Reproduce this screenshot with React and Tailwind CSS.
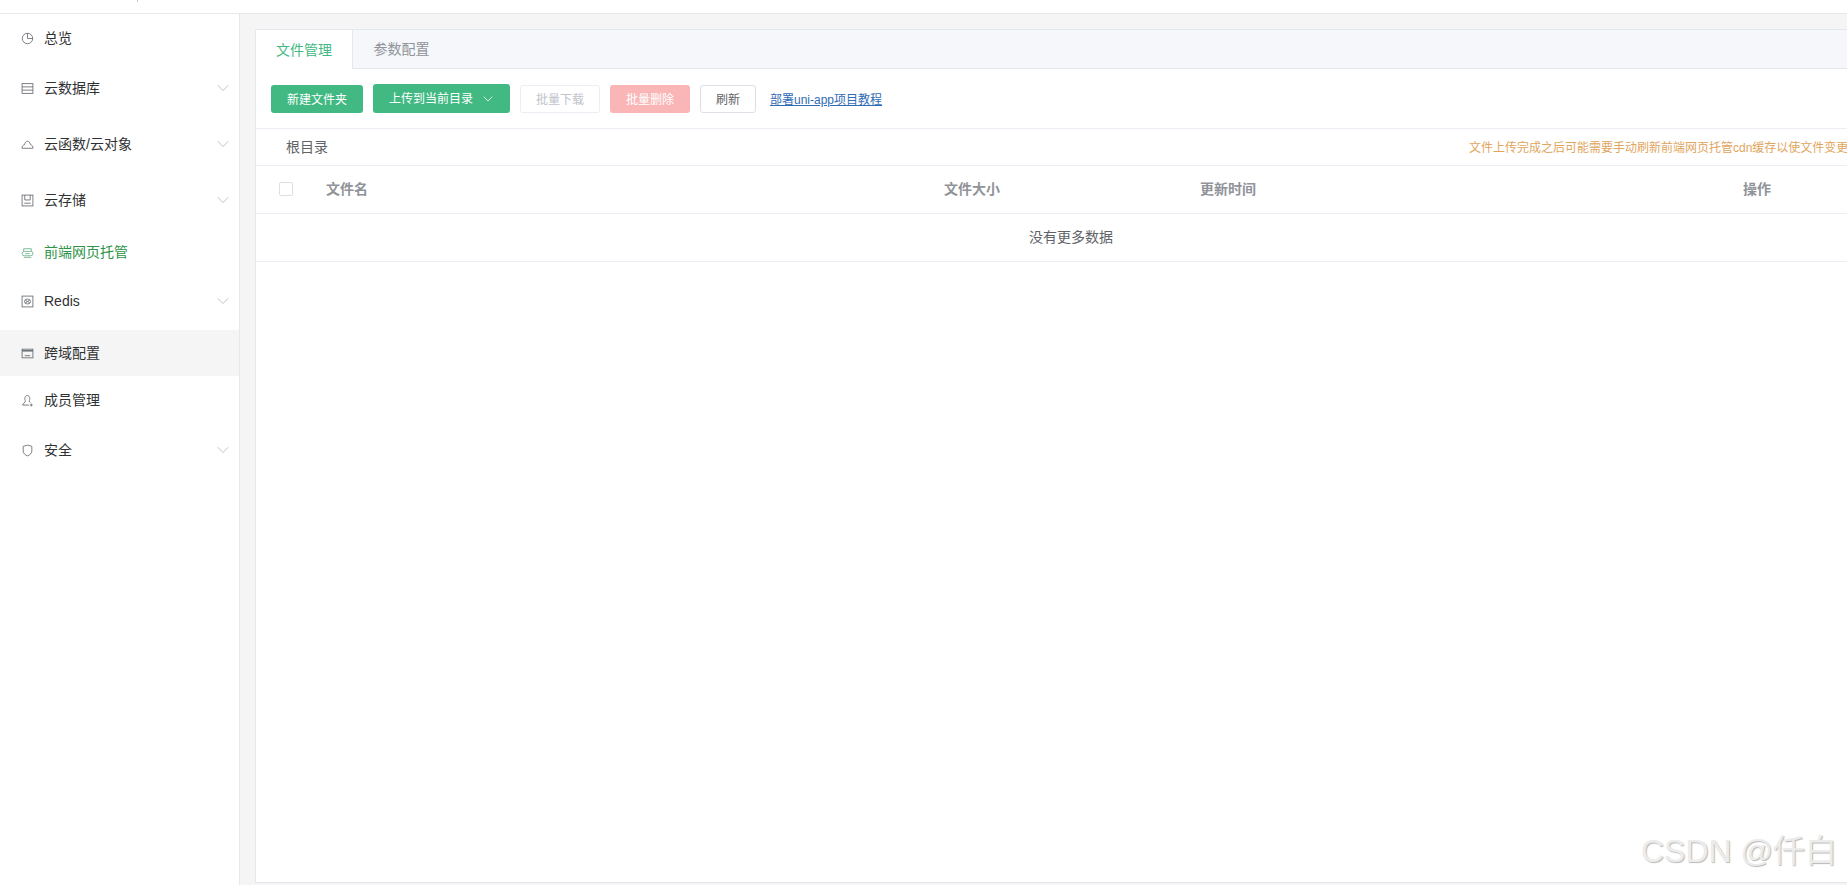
import React from 'react';
import { ChevronDown } from 'lucide-react';

const font = { fontFamily: '"Liberation Sans", "Noto Sans CJK SC", sans-serif' };

const icons = {
  overview: (
    <>
      <circle cx="6" cy="6" r="4.8" />
      <path d="M6 1.2V6h4.8" />
    </>
  ),
  database: (
    <>
      <rect x="1" y="1.5" width="10" height="9" />
      <path d="M1 4.5h10M1 7.5h10" />
    </>
  ),
  cloud: <path d="M1 9.500h10c.3-1.800-.8-3-2.200-3.300C8.300 4 7.200 3 6 3 4.800 3 3.700 4 3.200 6.200 1.800 6.500.7 7.700 1 9.500z" />,
  storage: (
    <>
      <rect x="1" y="1" width="10" height="10" />
      <path d="M3.500 1v4.500h5V1M3 8.500h6" />
    </>
  ),
  hosting: (
    <>
      <path d="M2.500 5V2.500h7V5" />
      <rect x="1" y="5" width="10" height="4" rx="2" />
      <path d="M2.500 10.500h7M4 7h4" />
    </>
  ),
  redis: (
    <>
      <rect x="1" y="1" width="10" height="10" />
      <ellipse cx="6" cy="6" rx="2.800" ry="2.300" />
      <path d="M4 4.800l4 2.400M8 4.800l-4 2.400" />
    </>
  ),
  cors: (
    <>
      <rect x="1" y="2" width="10" height="8" />
      <path d="M1 3.500h10" strokeWidth="1.400" />
      <path d="M3.500 8h5" />
    </>
  ),
  member: (
    <>
      <path d="M4.300 6.500C3 5 3.200 1.800 5.800 1.300 8.500 1.800 8.600 5 7.400 6.500" />
      <path d="M4.300 6.500L1.300 10.200h6.200M7.400 6.500l1.300 1.500M9.500 8.800v2.700M8.200 10.200h2.600" />
    </>
  ),
  safe: <path d="M2 2.200L6 1l4 1.200v4.300c0 2.200-2 3.800-4 4.500-2-.7-4-2.300-4-4.500z" />,
};

const menus = [
  { label: '总览', icon: 'overview', rowClass: 'h-[46px] pt-[2px]' },
  { label: '云数据库', icon: 'database', rowClass: 'h-[56px]', arrow: true },
  { label: '云函数/云对象', icon: 'cloud', rowClass: 'h-[56px]', arrow: true },
  { label: '云存储', icon: 'storage', rowClass: 'h-[56px]', arrow: true },
  { label: '前端网页托管', icon: 'hosting', rowClass: 'h-[48px]', active: true },
  { label: 'Redis', icon: 'redis', rowClass: 'h-[54px] pb-[4px]', arrow: true },
  { label: '跨域配置', icon: 'cors', rowClass: 'h-[46px] bg-[#f5f5f5]' },
  { label: '成员管理', icon: 'member', rowClass: 'h-[48px]' },
  { label: '安全', icon: 'safe', rowClass: 'h-[52px]', arrow: true },
];

const MenuItem = ({ item }) => (
  <div className={`flex items-center pl-[21px] pr-[6px] ${item.rowClass}`}>
    <svg
      viewBox="0 0 12 12"
      fill="none"
      stroke="currentColor"
      strokeWidth="0.8"
      className={`w-[13px] h-[13px] shrink-0 ${item.active ? 'text-[#6db48a]' : 'text-[#696d72]'}`}
    >
      {icons[item.icon]}
    </svg>
    <span className={`ml-[10px] text-[14px] leading-none ${item.active ? 'text-[#2e9448]' : 'text-[#303133]'}`}>
      {item.label}
    </span>
    {item.arrow && <ChevronDown size={20} strokeWidth={0.9} className="ml-auto text-[#a8adb5]" />}
  </div>
);

const Sidebar = () => (
  <aside className="w-[240px] shrink-0 bg-white border-r border-[#e8e8e8]">
    {menus.map((item) => (
      <MenuItem key={item.label} item={item} />
    ))}
  </aside>
);

const Toolbar = () => (
  <div className="h-[60px] flex items-center pl-[15px] border-b border-[#ebeef5] shrink-0">
    <button className="w-[92px] h-[28px] pt-[2px] rounded-[3px] bg-[#42b983] text-white text-[12px]">新建文件夹</button>
    <button className="ml-[10px] w-[137px] h-[29px] rounded-[3px] bg-[#42b983] text-white text-[12px] flex items-center pl-[16px]">
      上传到当前目录
      <ChevronDown size={16} strokeWidth={1.2} className="ml-[7px]" />
    </button>
    <button className="ml-[10px] w-[80px] h-[28px] pt-[2px] rounded-[3px] border border-[#ebeef5] text-[#c0c4cc] text-[12px]">批量下载</button>
    <button className="ml-[10px] w-[80px] h-[28px] pt-[2px] rounded-[3px] bg-[#fab6b6] text-white text-[12px]">批量删除</button>
    <button className="ml-[10px] w-[56px] h-[28px] pt-[2px] rounded-[3px] border border-[#dcdfe6] text-[#606266] text-[12px]">刷新</button>
    <a className="ml-[14px] pt-[2px] text-[12px] text-[#2f6cb5] underline">部署uni-app项目教程</a>
  </div>
);

const Breadcrumb = () => (
  <div className="h-[37px] flex items-center border-b border-[#ebeef5] shrink-0">
    <div className="w-[1213px] shrink-0 pl-[30px] text-[14px] text-[#606266]">根目录</div>
    <div className="shrink-0 pt-px whitespace-nowrap text-[12px] text-[#dfa65e]">
      文件上传完成之后可能需要手动刷新前端网页托管cdn缓存以使文件变更生效
    </div>
  </div>
);

const FileTable = () => (
  <div className="w-[1630px] shrink-0">
    <div className="h-[48px] grid grid-cols-[70px_618px_256px_543px_143px] items-center border-b border-[#ebeef5] text-[14px] font-bold text-[#909399]">
      <div className="pl-[23px]">
        <div className="w-[14px] h-[14px] -mt-px rounded-[2px] border border-[#dcdfe6] bg-white" />
      </div>
      <div>文件名</div>
      <div>文件大小</div>
      <div>更新时间</div>
      <div>操作</div>
    </div>
    <div className="h-[48px] flex items-center justify-center border-b border-[#ebeef5] text-[14px] text-[#606266]">
      没有更多数据
    </div>
  </div>
);

const App = () => (
  <div className="relative w-[1847px] h-[885px] overflow-hidden bg-[#f5f5f5] flex flex-col" style={font}>
    <header className="h-[14px] shrink-0 bg-white border-b border-[#e8e8e8] pl-[137px]">
      <div className="w-px h-[2px] bg-[#c8c8c8]" />
    </header>
    <div className="flex flex-1 min-h-0">
      <Sidebar />
      <main className="flex-1 min-w-0 pl-[15px] pt-[15px] pb-[2px]">
        <div className="h-full bg-white border border-r-0 border-[#e4e7ed] rounded-tl-[2px] flex flex-col overflow-hidden">
          <div className="h-[39px] shrink-0 flex bg-[#f5f7fa] border-b border-[#e4e7ed]">
            <div className="w-[97px] h-[39px] pt-px flex items-center justify-center bg-white border-r border-[#e4e7ed] text-[14px] text-[#42b983]">
              文件管理
            </div>
            <div className="w-[97px] pt-px flex items-center justify-center text-[14px] text-[#909399]">参数配置</div>
          </div>
          <Toolbar />
          <Breadcrumb />
          <FileTable />
        </div>
      </main>
    </div>
    <div className="absolute left-[1641px] top-[831px] text-[32px] leading-[40px] whitespace-nowrap text-[#ececec] [text-shadow:1px_1px_1px_#b8b8b8]">
      CSDN @仟白
    </div>
  </div>
);

export default App;
